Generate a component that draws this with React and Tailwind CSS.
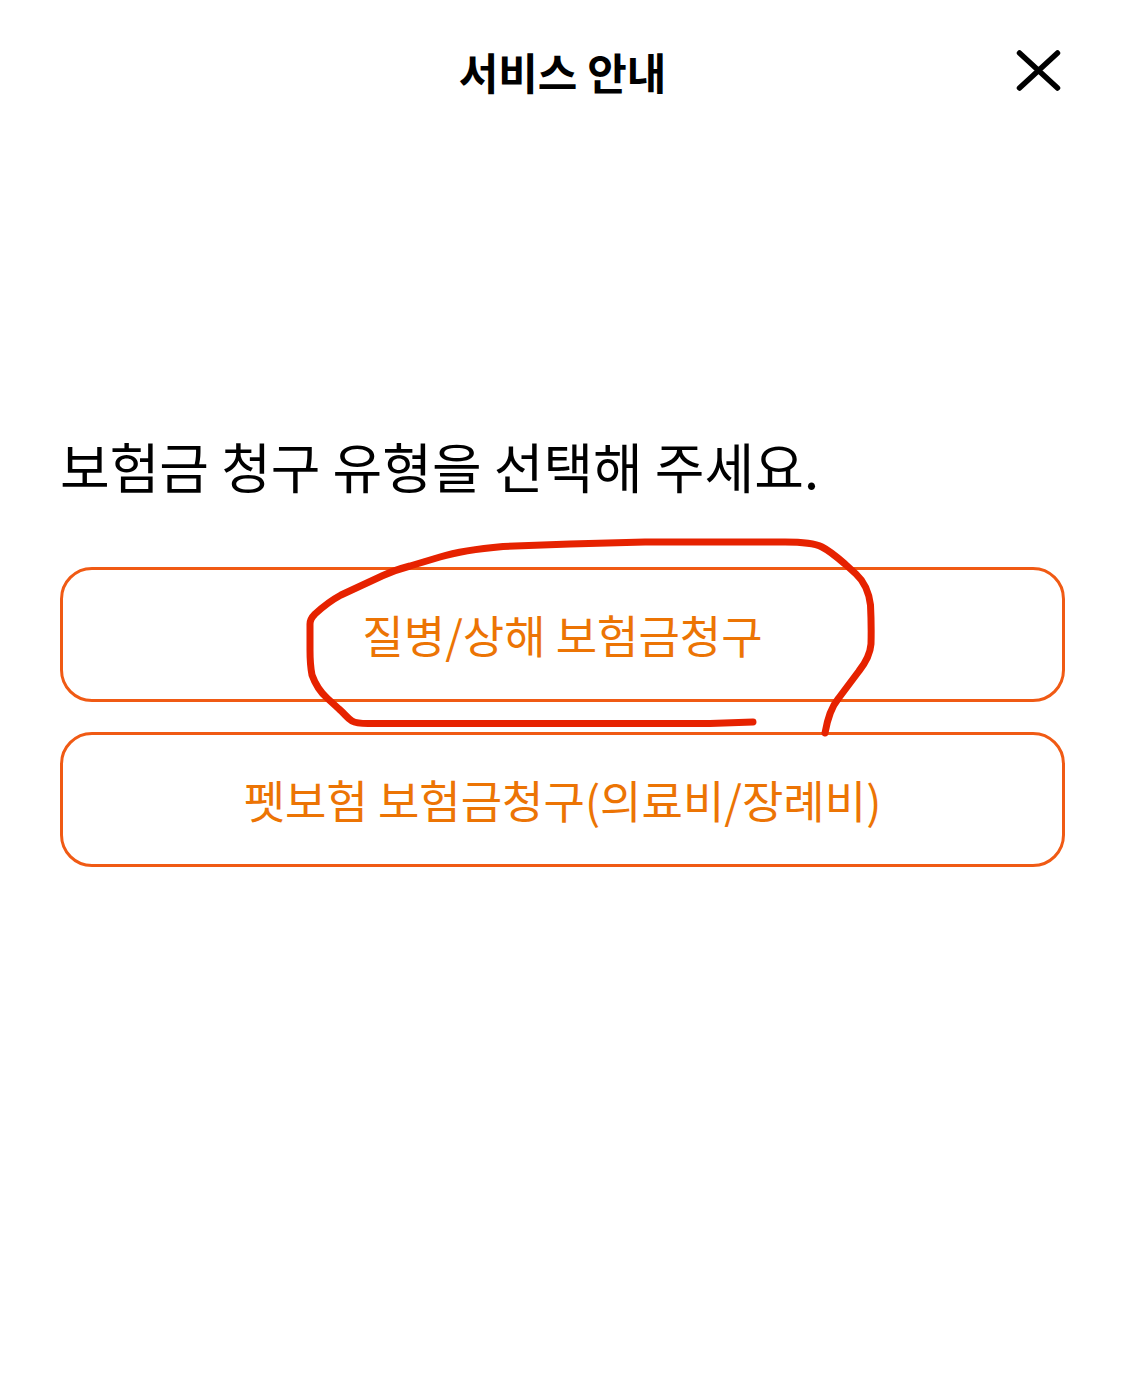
const choices = ['질병/상해 보험금청구', '펫보험 보험금청구(의료비/장례비)'];

function CloseIcon() {
  return (
    <svg viewBox="0 0 46 42" className="h-[42px] w-[46px]" fill="none" stroke="#000000" strokeWidth="5.5" strokeLinecap="round" aria-hidden="true">
      <path d="M3.500 3 L41.500 38 M41.500 3 L3.500 38" />
    </svg>
  );
}

function PenMark() {
  return (
    <svg
      viewBox="300 530 580 210"
      className="pointer-events-none absolute -top-[37px] left-1/2 h-[210px] w-[580px] -translate-x-[263px]"
      fill="none"
      stroke="#e62200"
      strokeWidth="7"
      strokeLinecap="round"
      strokeLinejoin="round"
      aria-hidden="true"
    >
      <path d="M753 722 L710 723.500 H372 Q357 724 352 721 C347 718 345 714 339 709 L327 698 Q317 689 312 675 Q310 665 310 650 V624 Q310 619 315 614 Q328 602 341 595 L383 575.500 Q395 570 410 566 L440 557 Q463 550 503 546.500 L570 544 L645 542 H785 Q812 542 822 547 Q830 551 845 564 L856 574 Q868 585 870.500 605 Q871.500 625 871 644 Q870 657 859 671 L838 699 Q829 710 825 733" />
    </svg>
  );
}

export default function App() {
  return (
    <div className="min-h-screen bg-white font-['Noto_Sans_CJK_KR',sans-serif] text-black">
      <header className="relative flex h-[142px] items-center justify-center">
        <h1 className="text-[43px] leading-[66px] font-bold">서비스 안내</h1>
        <button type="button" aria-label="닫기" className="absolute top-[50px] right-[63px]">
          <CloseIcon />
        </button>
      </header>
      <main className="px-[60px] pt-[284px]">
        <h2 className="text-[54px] leading-[80px]">보험금 청구 유형을 선택해 주세요.</h2>
        <div className="relative mt-[61px] flex flex-col gap-[30px]">
          {choices.map((label) => (
            <button
              key={label}
              type="button"
              className="h-[135px] w-full rounded-[32px] border-3 border-[#f05a14] pt-px text-[45px] text-[#ec7404]"
            >
              {label}
            </button>
          ))}
          <PenMark />
        </div>
      </main>
    </div>
  );
}
